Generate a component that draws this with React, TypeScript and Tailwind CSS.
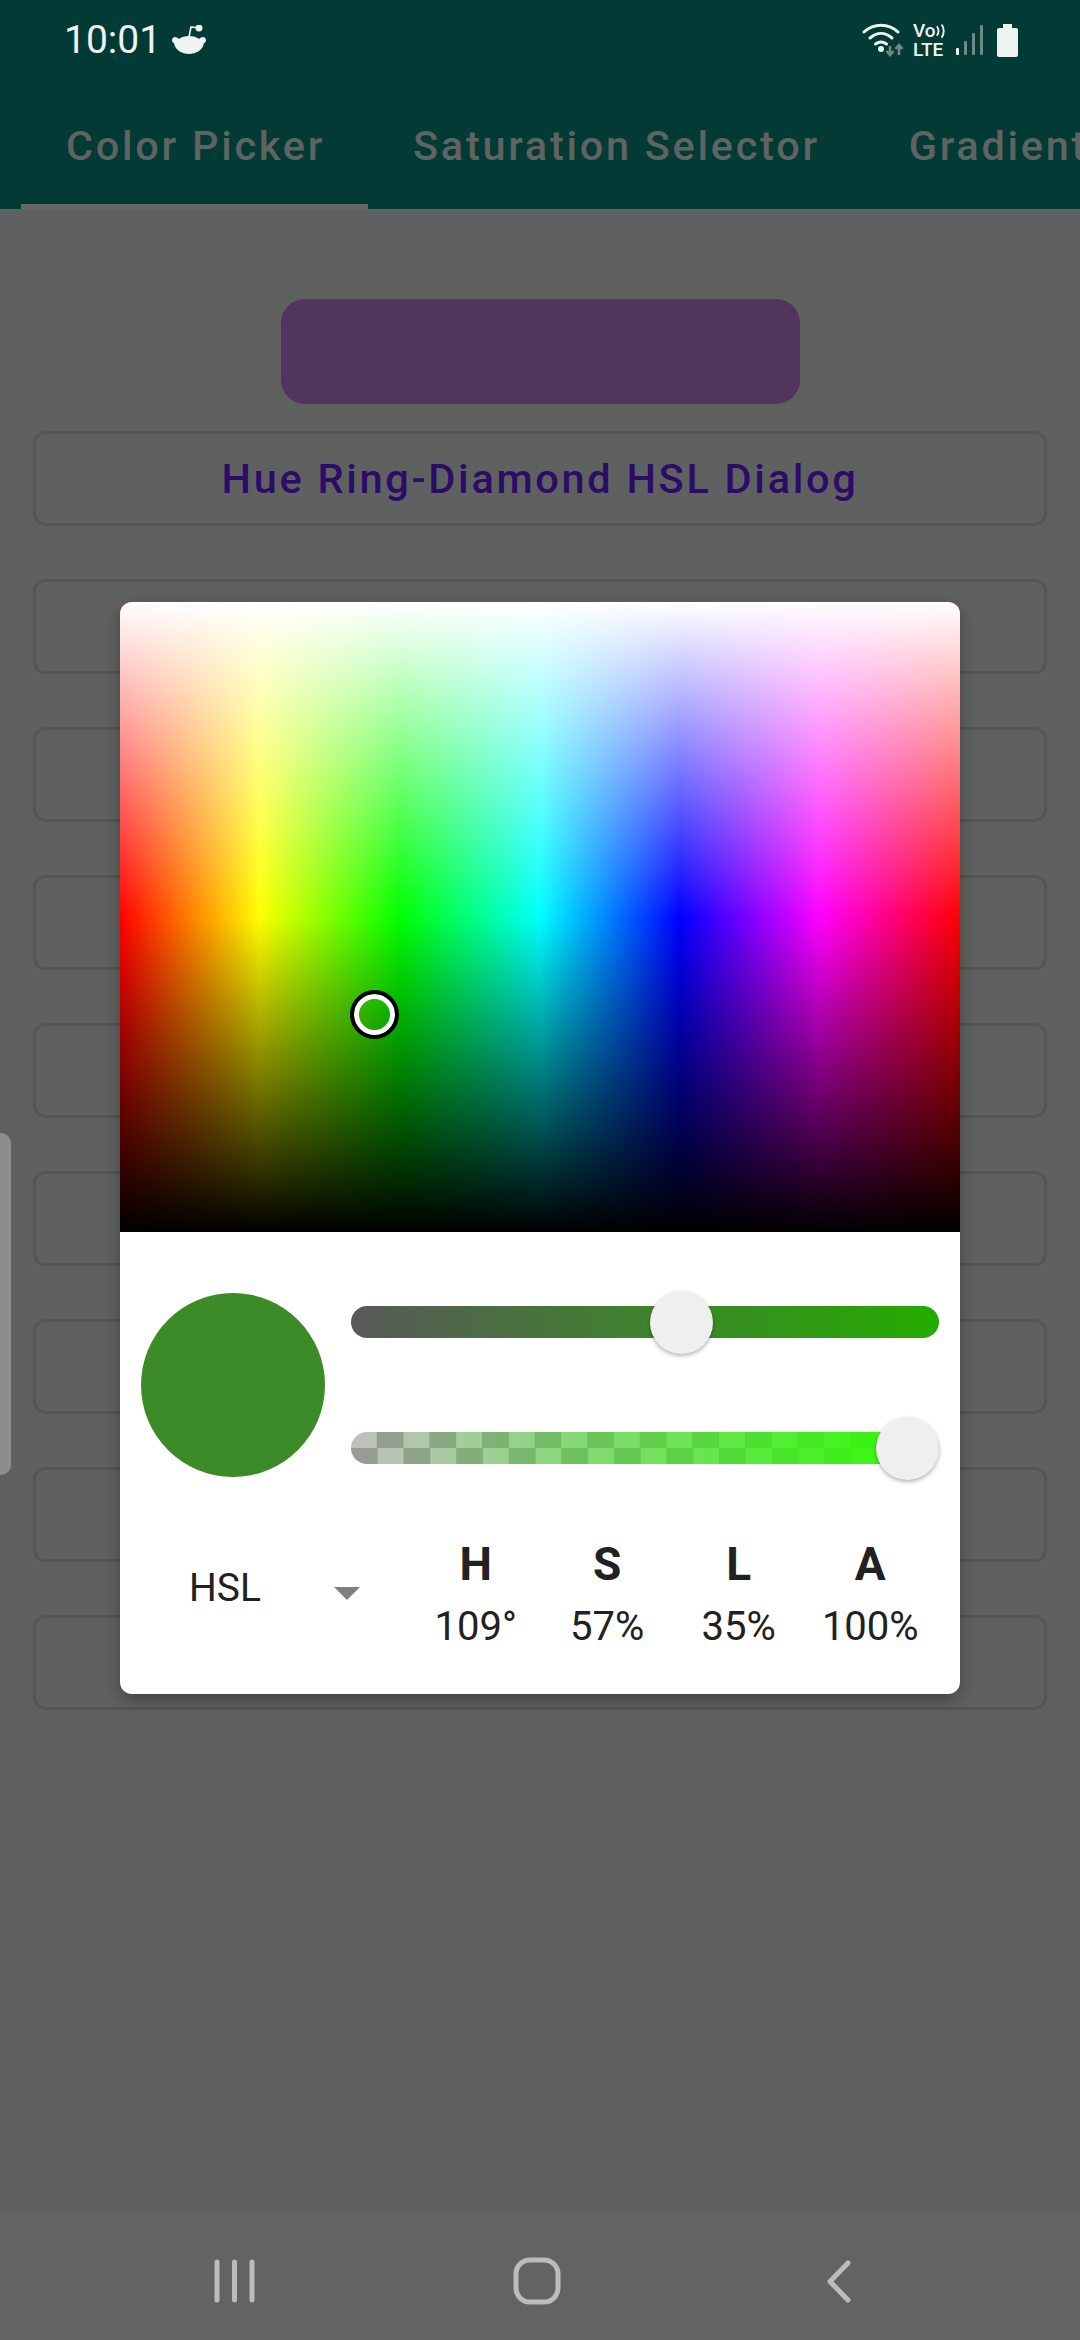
const buttons = Array.from({ length: 8 });

const ValueColumn = ({ label, value }: { label: string; value: string }) => (
  <div className="flex w-[131.5px] flex-col items-center">
    <span className="text-[46px] leading-[54px] font-bold">{label}</span>
    <span className="mt-[12px] text-[40px] leading-[48px]">{value}</span>
  </div>
);

const StatusBar = () => (
  <div className="flex h-[72px] items-center justify-between pt-[8px] pr-[62px] pl-[64px] text-[#eef2f1]">
    <div className="flex items-center gap-[11px]">
      <span className="text-[39px] leading-[46px] font-normal">10:01</span>
      <svg width="34" height="30" viewBox="0 0 34 30" fill="#eef2f1">
        <path d="M17 11c-4 0-8 1-10 3-1-1-2-2-4-2-2 0-3 2-3 3 0 2 1 3 2 3 1 7 8 11 15 11s14-4 15-11c1 0 2-1 2-3 0-1-1-3-3-3-2 0-3 1-4 2-2-2-6-3-10-3z" />
        <circle cx="27" cy="3" r="3.5" />
        <path d="M17 12 19 2l8 1" fill="none" stroke="#eef2f1" strokeWidth="1.6" />
      </svg>
    </div>
    <div className="flex items-center">
      <svg width="42" height="34" viewBox="0 0 42 34" fill="none">
        <path d="M2 9c10-9 24-9 34 0" stroke="#eef2f1" strokeWidth="3" strokeLinecap="round" />
        <path d="M8 15c7-6 15-6 22 0" stroke="#eef2f1" strokeWidth="3" strokeLinecap="round" />
        <path d="M13.500 21c4-3 7-3 11 0" stroke="#eef2f1" strokeWidth="3" strokeLinecap="round" />
        <circle cx="19" cy="26" r="3" fill="#eef2f1" />
        <path d="M28 23v8m-3.500-3 3.500 4 3.500-4M37 32v-9m-3.500 3 3.500-4 3.500 4" stroke="#6f8a85" strokeWidth="2.500" />
      </svg>
      <div className="ml-[9px] flex w-[32px] flex-col text-[19px] leading-[19px] font-medium">
        <div className="flex items-center">
          <span>Vo</span>
          <svg width="10" height="16" viewBox="0 0 10 16" fill="none">
            <path d="M1 3c2 3 2 7 0 10M6 1c3 4 3 10 0 14" stroke="#eef2f1" strokeWidth="2" />
          </svg>
        </div>
        <span>LTE</span>
      </div>
      <svg className="ml-[11px]" width="28" height="30" viewBox="0 0 28 30">
        <rect x="0" y="23" width="3" height="7" rx="1" fill="#eef2f1" />
        <rect x="8" y="16" width="3" height="14" rx="1" fill="#6f8a85" />
        <rect x="16" y="8" width="3" height="22" rx="1" fill="#6f8a85" />
        <rect x="24" y="0" width="3" height="30" rx="1" fill="#6f8a85" />
      </svg>
      <svg className="ml-[13px]" width="21" height="33" viewBox="0 0 21 33" fill="#eef2f1">
        <path d="M6 0h9v4h4a2 2 0 0 1 2 2v25a2 2 0 0 1-2 2H2a2 2 0 0 1-2-2V6a2 2 0 0 1 2-2h4z" />
      </svg>
    </div>
  </div>
);

const Tabs = () => (
  <div className="flex h-[137px] overflow-hidden pl-[21px] text-[41.500px] font-medium tracking-[2.700px] whitespace-nowrap text-[#5f6362]">
    <div className="flex h-full items-center border-b-[5px] border-[#666666] pt-[16px] pr-[43px] pl-[45px]">
      Color Picker
    </div>
    <div className="flex h-full items-center pt-[16px] pr-[44px] pb-[5px] pl-[45px]">Saturation Selector</div>
    <div className="flex h-full items-center px-[45px] pt-[16px] pb-[5px]">Gradient Angle</div>
  </div>
);

const HueSlider = () => (
  <div className="relative h-[32px] rounded-full bg-[linear-gradient(to_right,#595959,#24ac00)]">
    <div className="absolute top-[-15px] left-[299px] h-[63px] w-[63px] rounded-full bg-[#efefef] shadow-[0_2px_4px_rgba(0,0,0,0.3)]" />
  </div>
);

const AlphaSlider = () => (
  <div className="relative h-[32px] rounded-full bg-[linear-gradient(to_right,#2bff0000,#2bff00),repeating-conic-gradient(#999999_0_25%,#c0c0c0_0_50%)] bg-size-[100%_100%,52.600px_32px]">
    <div className="absolute top-[-15px] right-0 h-[63px] w-[63px] rounded-full bg-[#efefef] shadow-[0_2px_4px_rgba(0,0,0,0.3)]" />
  </div>
);

const ColorDialog = () => (
  <div className="absolute top-[602px] left-[120px] w-[840px] overflow-hidden rounded-[12px] bg-white shadow-[0_6px_16px_rgba(0,0,0,0.3)]">
    <div className="relative h-[630px] bg-[linear-gradient(to_bottom,#ffffff,#ffffff00_50%,#00000000_50%,#000000),linear-gradient(to_right,#ff0000,#ffff00,#00ff00,#00ffff,#0000ff,#ff00ff,#ff0000)]">
      <div className="absolute top-[391.500px] left-[233.500px] h-[41px] w-[41px] rounded-full border-[5px] border-white outline-[4px] outline-black" />
    </div>
    <div className="flex items-center pt-[61px] pr-[21px] pl-[21px]">
      <div className="h-[184px] w-[184px] rounded-full bg-[#3b8b28]" />
      <div className="ml-[26px] flex flex-1 flex-col gap-[94px]">
        <HueSlider />
        <AlphaSlider />
      </div>
    </div>
    <div className="mt-[60px] flex h-[157px] text-[#212121]">
      <div className="flex w-[290px] items-start pt-[28px] pl-[69px]">
        <span className="text-[39px] leading-[46px]">HSL</span>
        <div className="mt-[22px] ml-[73px] h-0 w-0 border-x-[13.500px] border-t-[13px] border-x-transparent border-t-[#7f7f7f]" />
      </div>
      <div className="flex">
        <ValueColumn label="H" value="109°" />
        <ValueColumn label="S" value="57%" />
        <ValueColumn label="L" value="35%" />
        <ValueColumn label="A" value="100%" />
      </div>
    </div>
  </div>
);

const NavBar = () => (
  <div className="mt-auto flex h-[127px] items-start bg-[#636363] pt-[38px]">
    <svg width="1080" height="60" viewBox="0 0 1080 60" fill="none" stroke="#bcbcbc" strokeLinecap="round">
      <path d="M217 11v38M234.500 11v38M252 11v38" strokeWidth="5" />
      <rect x="516" y="9" width="42" height="42" rx="14" strokeWidth="5" />
      <path d="M848 12 830 30.500 848 49" strokeWidth="5" strokeLinejoin="round" />
    </svg>
  </div>
);

export default function App() {
  return (
    <div className="relative flex h-[2340px] w-[1080px] flex-col overflow-hidden bg-[#5f6160] font-['Roboto',sans-serif]">
      <div className="bg-[#023a35]">
        <StatusBar />
        <Tabs />
      </div>
      <div className="flex flex-col items-center px-[33px] pt-[90px]">
        <div className="h-[105px] w-[519px] rounded-[24px] bg-[#52355f]" />
        <div className="mt-[27px] flex h-[95px] w-full items-center justify-center rounded-[12px] border-[3px] border-[#545655] pt-[2px] text-[41.500px] font-medium tracking-[2.700px] text-[#2d0b68]">
          Hue Ring-Diamond HSL Dialog
        </div>
        {buttons.map((_, index) => (
          <div
            key={`button-${index}`}
            className="mt-[53px] h-[95px] w-full rounded-[12px] border-[3px] border-[#545655]"
          />
        ))}
      </div>
      <NavBar />
      <div className="absolute top-[1133px] left-0 h-[342px] w-[11px] rounded-r-[10px] bg-[#8c8e8d]" />
      <ColorDialog />
    </div>
  );
}
